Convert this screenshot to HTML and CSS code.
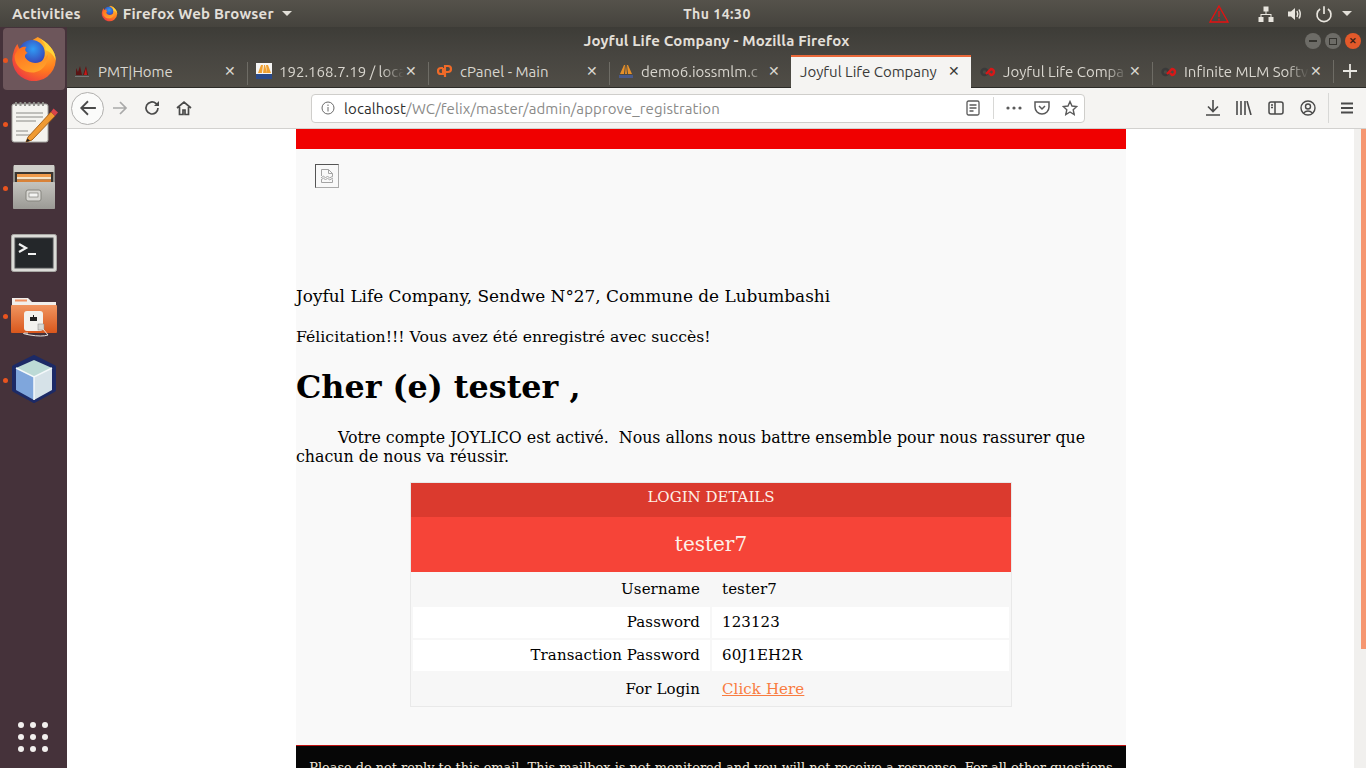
FILE: index.html
```html
<!DOCTYPE html>
<html lang="fr">
<head>
  <meta charset="UTF-8">
  <title>Joyful Life Company - Mozilla Firefox</title>
  <link rel="stylesheet" href="styles.css">
</head>
<body>

  <!-- barre du haut -->
  <div class="topbar">
    <div class="top-left">
      <span class="activities">Activities</span>
      <span class="app-menu">
        <svg class="ff-small" viewBox="0 0 32 32"><use href="#firefox"/></svg>
        Firefox Web Browser
        <span class="caret"></span>
      </span>
    </div>
    <div class="clock">Thu 14:30</div>
    <div class="top-right">
      <svg class="warn" width="20" height="18" viewBox="0 0 20 18"><path d="M10 1 L19 17 H1 Z M10 6 V12 M10 13.5 V15.5" fill="none" stroke="#e81010" stroke-width="1.3"/></svg>
      <svg class="net" width="16" height="16" viewBox="0 0 16 16" fill="#e8e5de"><rect x="5.5" y="0.5" width="5" height="5"/><rect x="0.5" y="11" width="5" height="5"/><rect x="10.5" y="11" width="5" height="5"/><path d="M7.5 5h1v3h5v3h-1V9H3.500v2h-1V8h5z"/></svg>
      <svg class="vol" width="16" height="16" viewBox="0 0 16 16" fill="none"><path d="M1 5.500h3L8 2v12L4 10.500H1z" fill="#e8e5de"/><path d="M10 5q1.500 3 0 6M12 3.500q2.500 4.500 0 9" stroke="#e8e5de" stroke-width="1.500"/></svg>
      <svg class="power" width="18" height="18" viewBox="0 0 16 16" fill="none" stroke="#e8e5de" stroke-width="1.500"><path d="M4.500 3.500a6.200 6.200 0 1 0 7 0M8 1v7"/></svg>
      <span class="caret"></span>
    </div>
  </div>

  <div class="desktop">

    <!-- lanceur -->
    <div class="launcher">
      <div class="launch-item active">
        <span class="dot"></span>
        <svg width="48" height="48" viewBox="0 0 32 32"><use href="#firefox"/></svg>
      </div>
      <div class="launch-item">
        <span class="dot"></span>
        <svg width="50" height="50" viewBox="0 0 50 50">
          <rect x="3" y="6" width="36" height="38" rx="2" fill="#f4f3ef" stroke="#a5a5a0"/>
          <path d="M7 15h27M7 19h27M7 23h20M7 33h12M7 37h16" stroke="#8a8a86"/>
          <path d="M6 6h31" stroke="#8f8f8a" stroke-width="4" stroke-dasharray="2 2.500"/>
          <path d="M19 39 L42 14 L46 18 L23 42 L17 44 Z" fill="#f09a32" stroke="#a8641c"/>
          <path d="M42 14 L44.500 10.500 L49 14.500 L46 18 Z" fill="#d9434a"/>
          <path d="M17 44 L18.500 40.500 L21 42.800 Z" fill="#222"/>
        </svg>
      </div>
      <div class="launch-item">
        <span class="dot"></span>
        <svg width="46" height="48" viewBox="0 0 46 48">
          <defs>
            <linearGradient id="cabinet" x1="0" y1="0" x2="0" y2="1">
              <stop offset="0" stop-color="#c4c3be"/>
              <stop offset="1" stop-color="#9b9a95"/>
            </linearGradient>
          </defs>
          <rect x="2" y="2" width="42" height="44" rx="2" fill="#8f8e89"/>
          <rect x="3" y="2" width="40" height="7" fill="#cfcec9"/>
          <rect x="4" y="9" width="38" height="10" fill="#3a3530"/>
          <rect x="6" y="11" width="34" height="3" fill="#ef9a4a"/>
          <rect x="6" y="14" width="34" height="2.500" fill="#f4e3c8"/>
          <rect x="6" y="16.500" width="34" height="2.500" fill="#d98238"/>
          <rect x="2" y="19" width="42" height="27" rx="1" fill="url(#cabinet)"/>
          <rect x="15" y="27" width="15" height="11" rx="2" fill="#dad9d5" stroke="#86857f"/>
          <rect x="18" y="30" width="9" height="4" fill="#f4f4f2" stroke="#6f6e69" stroke-width="0.600"/>
        </svg>
      </div>
      <div class="launch-item nudge-term">
        <svg width="46" height="38" viewBox="0 0 46 38">
          <rect x="0.500" y="0.500" width="45" height="37" rx="2" fill="#dcdcd8" stroke="#a8a8a4"/>
          <rect x="4" y="4" width="38" height="30" fill="#24272a" stroke="#4c4f50"/>
          <path d="M8 10l7 4-7 4" fill="none" stroke="#f2f2f2" stroke-width="2.200"/>
          <path d="M17 20h8" stroke="#f2f2f2" stroke-width="2"/>
        </svg>
      </div>
      <div class="launch-item nudge-folder">
        <span class="dot"></span>
        <svg width="48" height="44" viewBox="0 0 48 44">
          <defs>
            <linearGradient id="folderFill" x1="0" y1="0" x2="0" y2="1">
              <stop offset="0" stop-color="#f09560"/>
              <stop offset="1" stop-color="#d9571c"/>
            </linearGradient>
          </defs>
          <path d="M2 2h16l4 4h24v12H2z" fill="#f1efeb"/>
          <rect x="5" y="3.500" width="12" height="2" fill="#f09060"/>
          <rect x="1" y="9" width="46" height="28" rx="1" fill="url(#folderFill)"/>
          <rect x="14" y="15" width="19" height="20" rx="3" fill="#f3f2ee"/>
          <path d="M20 25v-4h3v-2h1v2h3v4z" fill="#222"/>
          <rect x="28" y="28" width="6" height="6" fill="#d8d8d4" stroke="#888" stroke-width="0.500"/>
          <path d="M18 37 Q8 37 20 39 T38 39 L33 33" fill="none" stroke="#e8e4df"/>
        </svg>
      </div>
      <div class="launch-item">
        <span class="dot"></span>
        <svg width="48" height="48" viewBox="0 0 48 48">
          <path d="M24 2 L44 12 V35 L24 46 L4 35 V12 Z" fill="#1c2a66" stroke="#1c2a66" stroke-width="4" stroke-linejoin="round"/>
          <path d="M24 5 L42 13 L24 22 L6 13 Z" fill="#bcdad6"/>
          <path d="M6 13 L24 22 V45 L6 35 Z" fill="#7fa6dc"/>
          <path d="M42 13 L24 22 V45 L42 35 Z" fill="#d6e2e8"/>
          <path d="M24 22 V45 M6 13 L24 22 L42 13" stroke="#f4f8fa" stroke-width="1.500" fill="none"/>
        </svg>
      </div>
      <div class="launch-grid">
        <i></i><i></i><i></i><i></i><i></i><i></i><i></i><i></i><i></i>
      </div>
    </div>

    <!-- fenetre firefox -->
    <div class="window">
      <div class="titlebar">
        <span class="win-title">Joyful Life Company - Mozilla Firefox</span>
        <div class="win-buttons">
          <span class="win-btn"><span class="min-mark"></span></span>
          <span class="win-btn"><span class="max-mark"></span></span>
          <span class="win-btn close">&#10005;</span>
        </div>
      </div>

      <div class="tabs">
        <div class="tab w-pmt">
          <svg class="fav" viewBox="0 0 16 16"><path d="M2 12V5l2 4 2-6 2 9zM9 12l3-9 2 9z" fill="#5a1414"/><path d="M1 13.500h14" stroke="#777"/><path d="M10 12l2-7 1 7z" fill="#c81818"/></svg>
          <span class="tab-label">PMT|Home</span>
          <span class="tab-x">&#10005;</span>
        </div>
        <div class="tab w-ip sep">
          <svg class="fav" viewBox="0 0 16 16"><rect width="16" height="16" fill="#f4f4f4"/><path d="M2 10L5 2h2L6 10zM7 10l1-8h1l2 8zM11 10L10 2h2l3 8z" fill="#f0a030"/><rect y="11" width="16" height="5" fill="#2a4a8a"/></svg>
          <span class="tab-label fade">192.168.7.19 / loca</span>
          <span class="tab-x">&#10005;</span>
        </div>
        <div class="tab w-cp sep">
          <svg class="fav" viewBox="0 0 16 16" fill="none" stroke="#f06a28" stroke-width="2.200"><path d="M6 5H4a3 3 0 0 0 0 6h2V5M8 14V3h3a3 3 0 0 1 0 6H9"/></svg>
          <span class="tab-label">cPanel - Main</span>
          <span class="tab-x">&#10005;</span>
        </div>
        <div class="tab w-demo sep">
          <svg class="fav" viewBox="0 0 16 16"><path d="M2 11L6 2h1L6 11zM7 11L8 1l1 10zM10 11L9 2h1l4 9z" fill="#e89028"/><path d="M1 12h14v3H1z" fill="#4a5a8a"/></svg>
          <span class="tab-label fade">demo6.iossmlm.c</span>
          <span class="tab-x">&#10005;</span>
        </div>
        <div class="tab w-active active">
          <span class="tab-label">Joyful Life Company</span>
          <span class="tab-x">&#10005;</span>
        </div>
        <div class="tab w-jl">
          <svg class="fav" viewBox="0 0 16 16" fill="none" stroke-width="2.400"><circle cx="4.500" cy="9" r="3" stroke="#3a3a3a"/><path d="M6 11 L11 6 a3 3 0 1 1 0 6 L9 10" stroke="#d81818"/></svg>
          <span class="tab-label fade">Joyful Life Compa</span>
          <span class="tab-x">&#10005;</span>
        </div>
        <div class="tab w-inf sep">
          <svg class="fav" viewBox="0 0 16 16" fill="none" stroke-width="2.400"><circle cx="4.500" cy="9" r="3" stroke="#3a3a3a"/><path d="M6 11 L11 6 a3 3 0 1 1 0 6 L9 10" stroke="#d81818"/></svg>
          <span class="tab-label fade">Infinite MLM Softv</span>
          <span class="tab-x">&#10005;</span>
        </div>
        <div class="tab-new sep">
          <svg width="14" height="14" viewBox="0 0 14 14"><path d="M7 0v14M0 7h14" stroke="#e8e6e1" stroke-width="1.800"/></svg>
        </div>
      </div>

      <div class="toolbar">
        <div class="back-btn">
          <svg width="18" height="18" viewBox="0 0 16 16" fill="none" stroke="#4a4a4a" stroke-width="1.600"><path d="M15 8H2M8 2L2 8l6 6"/></svg>
        </div>
        <svg class="tool-icon fwd" width="16" height="16" viewBox="0 0 16 16" fill="none" stroke="#a9a9a9" stroke-width="1.700"><path d="M1 8h13M8 2l6 6-6 6"/></svg>
        <svg class="tool-icon reload" width="16" height="16" viewBox="0 0 16 16" fill="none" stroke="#4a4a4a" stroke-width="1.700"><path d="M14 8a6 6 0 1 1-2-4.500L14 5"/><path d="M15 1v5h-5z" fill="#4a4a4a" stroke="none"/></svg>
        <svg class="tool-icon home" width="16" height="16" viewBox="0 0 16 16" fill="none" stroke="#4a4a4a" stroke-width="1.700"><path d="M1 8l7-6 7 6M3.500 7v7.500h3.500V10h2v4.500h3.500V7"/></svg>

        <div class="urlbar">
          <svg class="info" width="14" height="14" viewBox="0 0 14 14" fill="none" stroke="#6a6a6a"><circle cx="7" cy="7" r="6"/><path d="M7 6v4.500M7 3.500v1.500"/></svg>
          <span class="url"><b>localhost</b>/WC/felix/master/admin/approve_registration</span>
          <svg class="url-icon" width="14" height="16" viewBox="0 0 14 16" fill="none" stroke="#5a5a5a" stroke-width="1.300"><rect x="1" y="1" width="12" height="14" rx="1.500"/><path d="M3.500 5h7M3.500 8h7M3.500 11h4"/></svg>
          <span class="url-sep"></span>
          <svg class="url-dots" width="16" height="4" viewBox="0 0 16 4" fill="#5a5a5a"><circle cx="2" cy="2" r="1.600"/><circle cx="8" cy="2" r="1.600"/><circle cx="14" cy="2" r="1.600"/></svg>
          <svg class="url-icon pocket" width="16" height="14" viewBox="0 0 16 14" fill="none" stroke="#5a5a5a" stroke-width="1.500"><path d="M1 1h14v5a7 7 0 0 1-14 0z"/><path d="M5 5l3 3 3-3"/></svg>
          <svg class="url-icon star" width="16" height="16" viewBox="0 0 16 16" fill="none" stroke="#5a5a5a" stroke-width="1.400"><path d="M8 1.500l2 4.500 4.800.5-3.600 3.200 1 4.800L8 12l-4.200 2.500 1-4.800L1.200 6.500 6 6z"/></svg>
        </div>

        <div class="tool-right">
          <svg width="14" height="16" viewBox="0 0 14 16" fill="none" stroke="#4a4a4a" stroke-width="1.600"><path d="M7 0v11M2 6.500L7 11.500l5-5M0 15h14"/></svg>
          <svg width="16" height="14" viewBox="0 0 16 14" fill="none" stroke="#4a4a4a" stroke-width="1.600"><path d="M1 0v14M5 0v14M9 0v14M11 0l4 14"/></svg>
          <svg width="16" height="14" viewBox="0 0 16 14" fill="none" stroke="#4a4a4a" stroke-width="1.500"><rect x="1" y="1" width="14" height="12" rx="2"/><path d="M7 1v12M3 4h2M3 6.500h2"/></svg>
          <svg width="16" height="16" viewBox="0 0 16 16" fill="none" stroke="#4a4a4a" stroke-width="1.400"><circle cx="8" cy="8" r="7"/><circle cx="8" cy="6.500" r="2.500"/><path d="M3.500 13q4.500-4 9 0"/></svg>
          <span class="tool-sep"></span>
          <svg width="12" height="12" viewBox="0 0 12 12" stroke="#4a4a4a" stroke-width="1.800"><path d="M0 1.500h12M0 6h12M0 10.500h12"/></svg>
        </div>
      </div>

      <!-- contenu de la page -->
      <div class="viewport">
        <div class="mail">
          <div class="mail-top"></div>
          <div class="logo-zone">
            <span class="broken-img">
              <svg width="16" height="16" viewBox="0 0 16 16" fill="none" stroke="#a4a4a4"><path d="M2.500 8V1.500h7l4 4V8M9.500 1.500v4h4M2.500 11.500v3h11v-3M2 10l2.500-2 2 2 2-2 2 2 3.500-2M2 12l2.500-2 2 2 2-2 2 2 3.500-2"/></svg>
            </span>
          </div>
          <p class="address">Joyful Life Company, Sendwe N°27, Commune de Lubumbashi</p>
          <p class="congrats">Félicitation!!! Vous avez été enregistré avec succès!</p>
          <h1>Cher (e) tester ,</h1>
          <p class="intro">Votre compte JOYLICO est activé.&nbsp; Nous allons nous battre ensemble pour nous rassurer que chacun de nous va réussir.</p>

          <table class="login-table">
            <tr><th colspan="2" class="head-dark">LOGIN DETAILS</th></tr>
            <tr><th colspan="2" class="head-light">tester7</th></tr>
            <tr class="grey"><td class="lbl">Username</td><td class="val">tester7</td></tr>
            <tr><td class="lbl">Password</td><td class="val">123123</td></tr>
            <tr><td class="lbl">Transaction Password</td><td class="val">60J1EH2R</td></tr>
            <tr class="grey"><td class="lbl">For Login</td><td class="val"><a href="#">Click Here</a></td></tr>
          </table>

          <div class="mail-foot">Please do not reply to this email. This mailbox is not monitored and you will not receive a response. For all other questions</div>
        </div>
        <div class="scrollbar"><span class="thumb"></span></div>
      </div>
    </div>
  </div>

  <svg class="defs" width="0" height="0">
    <defs>
      <radialGradient id="ffOuter" cx="0.750" cy="0.250" r="1">
        <stop offset="0" stop-color="#ffc22e"/>
        <stop offset="0.500" stop-color="#ff7a1e"/>
        <stop offset="1" stop-color="#e6244e"/>
      </radialGradient>
      <radialGradient id="ffGlobe" cx="0.550" cy="0.350" r="0.700">
        <stop offset="0" stop-color="#2f9cf5"/>
        <stop offset="1" stop-color="#3a2fa8"/>
      </radialGradient>
      <linearGradient id="ffFox" x1="0" y1="0" x2="0.600" y2="1">
        <stop offset="0" stop-color="#ff6a1e"/>
        <stop offset="1" stop-color="#ffa02a"/>
      </linearGradient>
      <symbol id="firefox" viewBox="0 0 32 32">
        <path d="M18.500 1.300C25 5 30.500 10 30.500 17A14.500 14.500 0 1 1 2.500 11C3 9 4 7 5 6C5.500 8 6 9 7 10C8.500 7 11 5 14 4Z" fill="url(#ffOuter)"/>
        <circle cx="14.500" cy="12" r="8.700" fill="url(#ffGlobe)"/>
        <path d="M3 14C5 9 8 7.500 11 8C9.500 9.500 10 11 12 12C10 12.500 9.500 14 10.500 15.500C12 18 16 19.500 20 18C22 17.300 24 15.500 25 13C26 19 21 25 15 25C9 25 3 21 3 14Z" fill="url(#ffFox)"/>
        <path d="M18.500 1.300C25 5 30.500 10 30.500 17C29 13 26.500 11 23.500 10C24.500 7 22 3.500 18.500 1.300Z" fill="#ffd53a"/>
      </symbol>
    </defs>
  </svg>

</body>
</html>
```

FILE: styles.css
```css
* {
  box-sizing: border-box;
}
html, body {
  margin: 0;
  height: 100%;
  overflow: hidden;
}
body {
  width: 1366px;
  height: 768px;
  font-family: Ubuntu, "Open Sans", "Noto Sans", sans-serif;
  background: #3c3b37;
}
.defs {
  position: absolute;
}

/* barre du haut */
.topbar {
  height: 27px;
  background: linear-gradient(#55524b, #45433d);
  color: #e2dfd8;
  font-size: 15px;
  font-weight: 600;
  letter-spacing: 0.200px;
  display: grid;
  grid-template-columns: 1fr auto 1fr;
  align-items: center;
}
.top-left {
  display: flex;
  align-items: center;
  padding-left: 12px;
}
.app-menu {
  display: flex;
  align-items: center;
  margin-left: 20px;
  gap: 5px;
}
.ff-small {
  width: 17px;
  height: 17px;
}
.caret {
  display: inline-block;
  margin-left: 3px;
  border-left: 5px solid transparent;
  border-right: 5px solid transparent;
  border-top: 5px solid #e2dfd8;
}
.clock {
  font-size: 14px;
  letter-spacing: 0.500px;
  margin-left: 68px;
}
.top-right {
  display: flex;
  align-items: center;
  justify-content: flex-end;
  padding-right: 14px;
}
.warn {
  margin-right: 29px;
}
.vol {
  margin-left: 13px;
}
.power {
  margin-left: 12px;
}
.top-right .caret {
  margin-left: 9px;
}

.desktop {
  display: flex;
  height: 741px;
}

/* lanceur */
.launcher {
  width: 67px;
  background: #45323a;
  display: flex;
  flex-direction: column;
  padding: 1px 2px 0 3px;
  position: relative;
}
.launch-item {
  height: 62px;
  width: 62px;
  border-radius: 4px;
  display: flex;
  align-items: center;
  justify-content: center;
  position: relative;
  margin-bottom: 2px;
}
.launch-item.active {
  background: #6d565b;
}
.nudge-term svg {
  margin-top: 4px;
}
.nudge-folder svg {
  margin-top: 6px;
}
.dot {
  position: absolute;
  left: 0;
  top: 30px;
  width: 5px;
  height: 5px;
  border-radius: 50%;
  background: #e9541f;
}
.launch-grid {
  position: absolute;
  left: 18px;
  bottom: 16px;
  display: grid;
  grid-template-columns: repeat(3, 6px);
  gap: 6px;
}
.launch-grid i {
  width: 6px;
  height: 6px;
  border-radius: 50%;
  background: #f2f0ee;
}

/* fenetre */
.window {
  flex: 1;
  display: flex;
  flex-direction: column;
  min-width: 0;
}
.titlebar {
  height: 28px;
  padding-bottom: 2px;
  background: linear-gradient(#3d3c37, #474540);
  display: flex;
  align-items: center;
  justify-content: center;
  position: relative;
  color: #e2dfd8;
  font-size: 15px;
  font-weight: 600;
  letter-spacing: 0.150px;
}
.win-buttons {
  position: absolute;
  right: 5px;
  top: 6px;
  display: flex;
  gap: 4px;
}
.win-btn {
  width: 16px;
  height: 16px;
  border-radius: 50%;
  background: #6d6c67;
  display: flex;
  align-items: center;
  justify-content: center;
  color: #3b2016;
  font-size: 9px;
}
.win-btn.close {
  background: #e2592a;
}
.min-mark {
  width: 8px;
  height: 1.500px;
  background: #35342f;
}
.max-mark {
  width: 8px;
  height: 7px;
  border: 1px solid #35342f;
}

/* onglets */
.tabs {
  height: 33px;
  background: linear-gradient(#474540, #504d46);
  display: flex;
  color: #d9d6cf;
  font-size: 15px;
  border-bottom: 1px solid #2c2b27;
}
.tab {
  display: flex;
  align-items: center;
  position: relative;
  padding: 0 10px 2px 0;
  min-width: 0;
  border-top: 2px solid transparent;
}
.tab.sep::before, .tab-new.sep::before {
  content: "";
  position: absolute;
  left: 0;
  top: 5px;
  height: 23px;
  width: 1px;
  background: #6e6c65;
}
.w-pmt { width: 180px; }
.w-ip { width: 181px; }
.w-cp { width: 181px; }
.w-demo { width: 182px; }
.w-active { width: 180px; }
.w-jl { width: 181px; }
.w-inf { width: 181px; }
.tab.active {
  background: #f5f4f2;
  color: #3a3a38;
  border-top-color: #e9683a;
  padding-left: 9px;
  padding-bottom: 3px;
  margin-bottom: -1px;
}
.fav {
  width: 16px;
  height: 16px;
  margin-left: 9px;
  flex: none;
}
.w-pmt .fav {
  margin-left: 7px;
}
.tab-label {
  margin-left: 7px;
  flex: 1;
  white-space: nowrap;
  min-width: 0;
}
.w-pmt .tab-label {
  margin-left: 8px;
}
.tab.active .tab-label {
  margin-left: 0;
}
.tab-label.fade {
  -webkit-mask-image: linear-gradient(to right, #000 82%, transparent 100%);
  mask-image: linear-gradient(to right, #000 82%, transparent 100%);
}
.tab-x {
  flex: none;
  width: 14px;
  font-size: 14px;
  text-align: center;
}
.tab-new {
  position: relative;
  flex: 1;
  display: flex;
  align-items: center;
  justify-content: center;
}

/* barre d'outils */
.toolbar {
  height: 41px;
  background: #f5f4f2;
  border-bottom: 1px solid #d2d1cf;
  display: flex;
  align-items: center;
  position: relative;
}
.back-btn {
  width: 33px;
  height: 33px;
  margin-left: 4px;
  border-radius: 50%;
  border: 1px solid #b1b0ae;
  background: #fbfbfa;
  display: flex;
  align-items: center;
  justify-content: center;
}
.fwd { margin-left: 8px; }
.reload { margin-left: 16px; }
.home { margin-left: 16px; }
.urlbar {
  height: 29px;
  width: 774px;
  margin-left: 119px;
  border: 1px solid #cfcecb;
  border-radius: 4px;
  background: #fff;
  display: flex;
  align-items: center;
  padding-left: 9px;
  font-size: 15px;
  letter-spacing: 0.100px;
}
.url {
  margin-left: 9px;
  flex: 1;
  color: #8a8a88;
  white-space: nowrap;
}
.url b {
  color: #2e2e2e;
  font-weight: 400;
}
.url-sep {
  width: 1px;
  height: 22px;
  background: #d8d8d6;
  margin: 0 12px 0 13px;
}
.url-dots { margin-right: 12px; }
.pocket { margin-right: 12px; }
.star { margin-right: 6px; }
.tool-right {
  display: flex;
  align-items: center;
  gap: 16px;
  margin-left: auto;
  padding-right: 13px;
}
.tool-sep {
  width: 1px;
  height: 30px;
  background: #d8d8d6;
  margin: 0 -4px;
}

/* contenu */
.viewport {
  flex: 1;
  background: #fff;
  position: relative;
  display: flex;
  justify-content: center;
  overflow: hidden;
  min-height: 0;
  padding-right: 12px;
}
.mail {
  width: 830px;
  margin-left: 1px;
  background: #f9f9f9;
  font-family: "DejaVu Serif", serif;
  color: #000;
  font-size: 16px;
}
.mail-top {
  height: 20px;
  background: #f00000;
}
.logo-zone {
  height: 138px;
  padding: 15px 0 0 19px;
}
.broken-img {
  display: flex;
  align-items: center;
  justify-content: center;
  width: 24px;
  height: 24px;
  border: 1px solid;
  border-color: #555 #aaa #aaa #555;
}
.address {
  margin: 0;
  line-height: 18px;
  height: 20px;
  font-size: 16.900px;
}
.congrats {
  margin: 20px 0 0;
  line-height: 20px;
  font-size: 15.700px;
}
h1 {
  margin: 21px 0 0;
  font-size: 31.800px;
  line-height: 37px;
  font-weight: 700;
}
.intro {
  margin: 23px 0 0;
  line-height: 19px;
  font-size: 15.840px;
  text-indent: 42px;
}
.login-table {
  width: 602px;
  margin: 16px auto 0;
  border-collapse: separate;
  border-spacing: 0;
  border: 1px solid #e9e9e9;
  font-size: 15px;
  table-layout: fixed;
}
.login-table th {
  font-weight: 400;
  color: #fdf0e8;
  padding: 0;
}
.head-dark {
  background: #db3a2e;
  height: 34px;
  font-size: 15px;
  vertical-align: top;
  line-height: 29px;
}
.login-table th.head-light {
  background: #f64438;
  height: 55px;
  font-size: 20px;
  padding-bottom: 2px;
}
.login-table td {
  height: 33px;
  padding: 0 10px 1px;
  border: 1px solid #f7f7f7;
  background: #fff;
  letter-spacing: 0.100px;
}
.login-table .grey td {
  background: #f7f7f7;
  height: 34px;
}
.lbl {
  text-align: right;
  width: 300px;
}
.login-table td.lbl {
  border-left-width: 2px;
}
.login-table td.val {
  border-right-width: 2px;
}
.login-table a {
  color: #f97c40;
}
.mail-foot {
  margin-top: 38px;
  height: 60px;
  background: #060606;
  border-top: 1px solid #c01010;
  color: #f3e9dc;
  font-size: 12.870px;
  text-align: center;
  padding-top: 14px;
  white-space: nowrap;
}
.scrollbar {
  position: absolute;
  right: 0;
  top: 0;
  bottom: 0;
  width: 12px;
  padding-left: 7px;
  background: #f1f0ee;
}
.thumb {
  display: block;
  width: 5px;
  height: 520px;
  background: #f59670;
}
```
